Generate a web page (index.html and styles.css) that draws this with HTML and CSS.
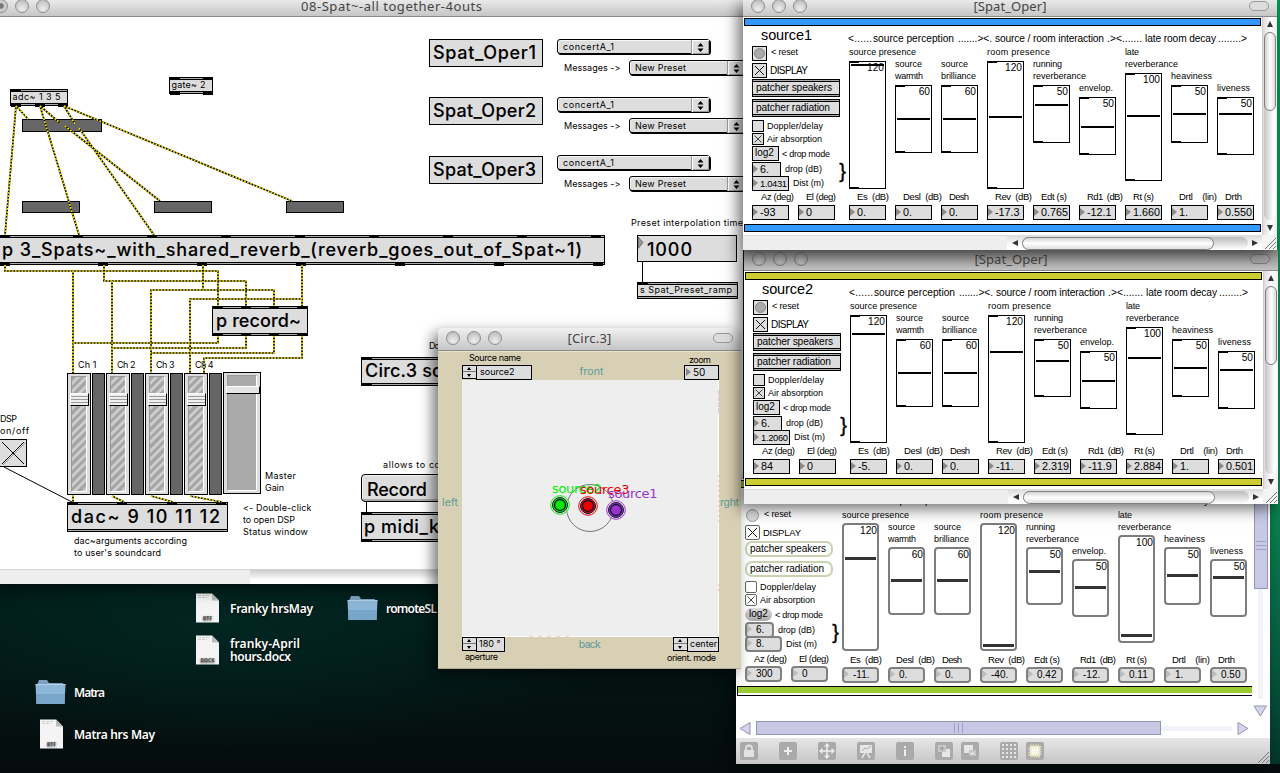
FILE: index.html
```html
<!DOCTYPE html>
<html lang="en">
<head>
<meta charset="utf-8">
<title>08-Spat~-all together-4outs</title>
<link rel="stylesheet" href="styles.css">
</head>
<body>
<main class="desktop">
  <div class="icons" id="icons"></div>

  <section class="window main-window">
    <header class="titlebar">
      <span class="lights"><i class="dirty"></i><i></i><i></i></span>
      <h1 class="title" data-w="181">08-Spat~-all together-4outs</h1>
    </header>
    <div class="main-body"></div>
    <footer class="main-scroll"><span></span></footer>
    <div class="patch" id="patch">
      <svg class="cords" id="cords" width="743" height="570"></svg>
    </div>
  </section>

  <section class="window max5-window">
    <div class="max5-content">
      <div class="panel max5" id="panel3"></div>
      <div class="vbar5"><span class="thumb5"><i></i></span><span class="track5"></span>
        <svg width="15" height="12"><path d="M1 1h12.500L7.300 11z" fill="#d4d4ec" stroke="#9494b0"/></svg></div>
    </div>
    <div class="hbar5">
      <svg width="12" height="13"><path d="M11 .5v12L1 6.500z" fill="#d4d4ec" stroke="#9494b0"/></svg>
      <span class="hthumb5"><i></i></span><span class="htrack5"></span>
      <svg width="12" height="13"><path d="M1 .5v12L11 6.500z" fill="#d4d4ec" stroke="#9494b0"/></svg>
    </div>
    <footer class="toolbar">
      <svg class="tool" viewBox="0 0 18 18"><path d="M4 8h10v7H4z" fill="#e2e2e2"/><path d="M6 8V6.500a3 3 0 0 1 6 0V8" fill="none" stroke="#e2e2e2" stroke-width="1.800"/></svg>
      <svg class="tool" viewBox="0 0 18 18"><path d="M9 5v8M5 9h8" stroke="#eee" stroke-width="2"/></svg>
      <svg class="tool" viewBox="0 0 18 18"><path d="M9 3v12M3 9h12" stroke="#eee" stroke-width="1.500"/><path d="M9 1l3 3.500H6zM9 17l3-3.500H6zM1 9l3.500-3v6zM17 9l-3.500-3v6z" fill="#eee"/></svg>
      <svg class="tool" viewBox="0 0 18 18"><path d="M3 3h12v8H3z" fill="#e6e6e6"/><path d="M5 9l3-3 2 1 4-3" fill="none" stroke="#aaa"/><path d="M8 11l-3 5M10 11l3 5" stroke="#e6e6e6" stroke-width="1.500"/></svg>
      <svg class="tool" viewBox="0 0 18 18"><path d="M8 4h2v2H8zM8 7.500h2V14H8z" fill="#eee"/></svg>
      <svg class="tool" viewBox="0 0 18 18"><path d="M7 7h8v8H7z" fill="#e6e6e6"/><path d="M3 3h8v7H3z" fill="#c9c9c9"/><path d="M7 4v5M4.500 6.500h5" stroke="#a0a0a0" stroke-width="1.300"/></svg>
      <svg class="tool pair" viewBox="0 0 18 18"><path d="M3 3h9v8H3z" fill="#e6e6e6"/><path d="M8 8h7v6H8z" fill="#c4c4c4"/><path d="M9.500 11.500h4" stroke="#eee" stroke-width="1.500"/></svg>
      <svg class="tool" viewBox="0 0 18 18"><path d="M2 4h14M2 8h14M2 12h14M2 16h14" transform="translate(0 -1)" stroke="#e6e6e6" stroke-width="2" stroke-dasharray="2 2"/></svg>
      <svg class="tool pair" viewBox="0 0 18 18"><path d="M4 4h10v10H4z" fill="#f6f6ee" stroke="#dfe2b0" stroke-width="3" stroke-dasharray="1.500 1"/></svg>
      <svg class="grip" viewBox="0 0 15 15"><path d="M3 14L14 3M7 14l7-7M11 14l3-3" stroke="#777"/></svg>
    </footer>
  </section>

  <section class="window circ-window">
    <header class="titlebar tall">
      <span class="lights"><i></i><i></i><i></i></span>
      <h2 class="title" data-w="44">[Circ.3]</h2>
      <span class="pill"></span>
    </header>
    <div class="circ-body">
      <div class="circ-row circ-top">
        <div class="circ-name"><span class="lbl" data-w="52">Source name</span>
          <div class="stepfield"><span class="stepper"></span><span class="cell name-cell">source2</span></div></div>
        <span class="dir" data-w="24">front</span>
        <div class="circ-zoom"><span class="lbl" data-w="22">zoom</span><span class="cell zoom-cell">50</span></div>
      </div>
      <div class="circ-mid">
        <span class="dir side" data-w="16">left</span>
        <svg class="field" width="257" height="257" viewBox="462 380 257 257">
          <rect x="462" y="380" width="257" height="257" fill="#fff"/>
          <rect x="462" y="380" width="256" height="256" fill="#eee"/>
          <path d="M718.500 390v23" stroke="#dcc8f0" stroke-dasharray="5 1"/>
          <path d="M718.500 475v50M718.500 584v10" stroke="#f6c8cc" stroke-dasharray="2 3"/>
          <path d="M529 636.500h42" stroke="#f8d4d8" stroke-dasharray="4 5"/>
          <circle cx="590" cy="508" r="23.500" fill="none" stroke="#777"/>
          <g id="sources"></g>
        </svg>
        <span class="dir side" data-w="19">rght</span>
      </div>
      <div class="circ-row circ-bottom">
        <div><div class="stepfield"><span class="stepper"></span><span class="cell ap-cell">180 °</span></div><span class="lbl ap" data-w="33">aperture</span></div>
        <span class="dir back" data-w="22">back</span>
        <div class="orient"><div class="stepfield"><span class="stepper"></span><span class="cell or-cell">center</span></div><span class="lbl om" data-w="49">orient. mode</span></div>
      </div>
    </div>
  </section>

  <section class="window oper-window oper2">
    <header class="titlebar dim">
      <span class="lights"><i></i><i></i><i></i></span>
      <h2 class="title" data-w="73">[Spat_Oper]</h2>
      <span class="pill"></span>
    </header>
    <div class="oper-content"><div class="panel yellow" id="panel2"></div></div>
  </section>

  <section class="window oper-window oper1">
    <header class="titlebar">
      <span class="lights"><i></i><i></i><i></i></span>
      <h2 class="title" data-w="73">[Spat_Oper]</h2>
      <span class="pill"></span>
    </header>
    <div class="oper-content"><div class="panel blue" id="panel1"></div></div>
  </section>
</main>
<script src="script.js"></script>
</body>
</html>
```
FILE: styles.css
```css
* { box-sizing: border-box; }
body { margin: 0; font-family: Inter, "Liberation Sans", sans-serif; color: #000; }
h1, h2 { margin: 0; font-weight: 400; }
i { font-style: normal; display: block; }
svg { display: block; flex: none; }

.desktop {
  position: relative; width: 1280px; height: 773px; overflow: hidden;
  background:
    linear-gradient(#009a54, #0a8a54 480px, #086044 640px, #043428 773px) 100% 0 / 10px 764px no-repeat,
    radial-gradient(ellipse 420px 130px at 230px 620px, #022622 0, transparent 100%),
    linear-gradient(#011a18 580px, #050c0c 773px);
}

/* Windows */
.window { position: absolute; isolation: isolate; box-shadow: -5px 5px 14px rgba(0,0,0,.55); }
.titlebar {
  position: relative; display: flex; align-items: center; justify-content: center;
  height: 17px; padding-bottom: 5px; border-bottom: 1px solid #8a8a8a;
  background: linear-gradient(#e9e9e9, #c6c6c6);
}
.titlebar.tall { height: 23px; padding-bottom: 2px; border-radius: 5px 5px 0 0; background: linear-gradient(#f0f0f0, #c6c6c6); }
.titlebar.dim { height: 21px; padding-bottom: 3px; background: linear-gradient(#8c8c8c, #c4c4c4); }
.title { font: 13px/16px "Noto Sans", "Open Sans", sans-serif; color: #444; white-space: nowrap; }
.lights { position: absolute; left: 8px; display: flex; gap: 7px; }
.lights i {
  width: 14px; height: 14px; border-radius: 50%; border: 1px solid #8f8f8f;
  background: radial-gradient(circle at 50% 75%, #eee, #b4b4b4);
}
.dim .lights i { background: radial-gradient(circle at 50% 75%, #bbb, #8e8e8e); border-color: #777; }
.lights i.dirty { background: radial-gradient(circle, #777 2px, #ccc 3.5px); }
.pill { position: absolute; right: 8px; width: 20px; height: 10px; border: 1.5px solid #999; border-radius: 5px; background: #ddd; }
.dim .pill { background: #aaa; border-color: #7c7c7c; }

.main-window { left: 0; top: 0; width: 743px; height: 584px; }
.main-window .lights { left: -6px; }
.main-window .title { position: absolute; left: 301px; top: -2px; }
.main-body { height: 552px; background: #fff; }
.main-scroll { height: 15px; background: #eee; border-top: 1px solid #d4d4d4; display: flex; padding-left: 250px; }
.main-scroll span { flex: 1; background: linear-gradient(#ccc, #fff 70%); }
.patch { position: absolute; inset: 0 0 15px 0; overflow: hidden; }
.cords { position: absolute; inset: 0; z-index: 2; }

/* Patch objects */
.node { position: absolute; background: #ddd; border: 1px solid #000; display: flex; align-items: center; white-space: nowrap; }
.node.object { border-width: 1px; box-shadow: inset 0 1px #aaa, inset 0 2px #000, inset 0 -1px #aaa, inset 0 -2px #000; }
.node.small { box-shadow: inset 0 1px #aaa, inset 0 2px #000, inset 0 -1px #aaa, inset 0 -2px #000; }
.node.meter { background: #666; }
.node.menu { border-radius: 3px; box-shadow: inset 1px 1px #f4f4f4, 1px 1px #000; }
.node.menu::after { content: ""; position: absolute; right: 0; top: 0; width: 17px; height: 14px; border-left: 1px solid #999; box-shadow: inset 1px 1px #fff, inset -1px -1px #999; }
.node.menu svg { position: absolute; right: 5px; top: 3px; }
.node.message { border-radius: 4px; box-shadow: inset 1px 1px #f4f4f4, inset 0 -2px #aaa; }
.port { position: absolute; height: 3px; width: 10px; background: #000; }
.text { position: absolute; line-height: 16px; white-space: pre; z-index: 1; }
.text.big { font-weight: 500; line-height: 24px; -webkit-text-stroke: .1px #000; }
.fader { position: absolute; width: 24px; height: 122px; padding: 2px 3px; border: 1px solid #000; background: #ddd; }
.fader i { height: 100%; border: 1px solid #999; border-right-color: #fff; border-bottom-color: #fff; background: repeating-linear-gradient(135deg, #a6a6a6 0 3px, #ccc 3px 6px); }
.fader b { position: absolute; left: 2px; top: 19px; width: 19px; height: 13px; border: 1px solid #000; border-left-color: #fff; border-top-color: #fff; background: repeating-linear-gradient(#eee 0 2px, #999 2px 3px); }
.fader.master { width: 38px; }
.fader.master i { background: #aaa; }
.fader.master b { top: 13px; width: 34px; height: 8px; background: #e4e4e4; }

/* Circular panner */
.circ-window { left: 438px; top: 328px; width: 303px; height: 341px; border-radius: 5px 5px 0 0; }
.circ-body { height: 318px; background: #d8d0b4; box-shadow: inset 0 1px #ece4c8, inset 0 -1px #b4ac90; }
.circ-row { display: flex; justify-content: space-between; padding: 0 22px 0 24px; }
.circ-top { height: 29px; padding-top: 2px; }
.circ-top .dir { margin: 13px 0 0 -33px; }
.lbl { display: block; font-size: 9px; line-height: 11px; white-space: nowrap; }
.circ-name .lbl { margin: -1px 0 2px 7px; }
.circ-zoom .lbl { margin: 1px 0 0 5px; }
.circ-zoom .cell { width: 35px; }
.circ-zoom .zoom-cell { position: relative; padding-left: 8px; font-size: 10px; }
.zoom-cell::before { content: ""; position: absolute; left: 1px; top: 2px; border: 4.5px solid transparent; border-left: 5px solid #888; border-right: 0; }
.stepfield { display: flex; height: 15px; }
.stepper { position: relative; width: 15px; height: 14px; border: 1px solid #000; background: linear-gradient(#ddd 0 5px, #777 5px 6px, #ddd 6px); }
.stepper::before, .stepper::after { content: ""; position: absolute; left: 4px; border: 2.5px solid transparent; }
.stepper::before { top: -1px; border-bottom: 3px solid #000; }
.stepper::after { top: 8px; border-top: 3px solid #000; }
.cell { display: block; height: 15px; margin-left: -1px; padding-left: 3px; border: 1px solid #000; background: #ddd; font-size: 9px; line-height: 12px; white-space: nowrap; }
.circ-zoom .cell { margin-left: 0; }
.name-cell { width: 56px; }
.ap-cell { width: 29px; padding-left: 2px; }
.or-cell { width: 32px; padding-left: 2px; }
.dir { font-size: 10.500px; line-height: 12px; color: #5b9c98; white-space: nowrap; }
.circ-mid { display: flex; height: 257px; align-items: center; }
.side { width: 24px; flex: none; padding-left: 4px; margin-top: -11px; overflow: visible; }
.field + .side { width: 22px; padding-left: 1px; }
.circ-bottom { height: 32px; }
.back { margin: 2px 0 0 7px; }
.ap { margin-left: 3px; margin-top: -1px; }
.orient .stepfield { margin-left: 6px; }
.src { font-family: "DejaVu Sans", sans-serif; font-size: 13px; }

/* Spat_Oper windows */
.oper-window { width: 534px; height: 250px; background: #fff; }
.oper1 { left: 743px; top: 0; }
.oper2 { left: 744px; top: 250px; height: 254px; }
.oper-content { display: grid; grid-template-columns: 519px 15px; grid-template-rows: 218px 15px; }
.vbar { padding: 15px 1px; background: linear-gradient(90deg, #ddd, #fff 60%, #eee); position: relative; border-left: 1px solid #ccc; }
.vbar::before, .vbar::after { content: ""; position: absolute; left: 4px; border: 3.5px solid transparent; }
.vbar::before { top: 1px; border-bottom: 6px solid #333; }
.vbar::after { bottom: 1px; border-top: 6px solid #333; }
.trough { height: 188px; border-radius: 7px; background: linear-gradient(90deg, #c4c4c4, #fff 80%); }
.trough span { display: block; height: 79px; border: 1.5px solid #808080; border-radius: 7px; background: linear-gradient(90deg, #d0d0d0, #fff 50%, #ddd); }
.hbar { display: flex; align-items: center; background: #eee; padding-left: 264px; border-top: 1px solid #ddd; }
.hbar .rail { flex: 1; height: 14px; display: flex; align-items: center; gap: 4px; padding: 0 4px 0 5px; background: linear-gradient(#ddd, #fff 70%); }
.hbar .rail > b { flex: 1; height: 13px; border-radius: 7px; background: linear-gradient(#bbb, #fff); }
.hbar .rail > b > i { width: 192px; height: 13px; border: 1.5px solid #808080; border-radius: 7px; background: linear-gradient(#d4d4d4, #fff 50%, #ddd); }
.arrow { border: 3.500px solid transparent; width: 6px; }
.arrow.l { border-right: 6px solid #333; border-left: 0; }
.arrow.r { border-left: 6px solid #333; border-right: 0; }
.corner { background: #f4f4f4; }

.panel { width: 519px; height: 218px; padding: 1px 0 0 1px; background: #fff; font: 9px/12px "Liberation Sans", Arial, sans-serif; }
.banner { width: 517px; height: 8px; border: 1px solid #000; }
.blue .banner { background: #3399ff; }
.yellow .banner { background: #cccc33; }
.panel-body { display: flex; height: 198px; white-space: pre; }
.controls { width: 105px; padding-left: 8px; flex: none; }
.srcname { height: 20px; padding-left: 9px; font-size: 14.500px; line-height: 18px; }
.row { display: flex; align-items: center; }
.bang, .tog { width: 15px; height: 15px; margin-right: 4px; border: 1px solid #000; background: #ddd; flex: none; }
.bang { padding: 1px; margin-bottom: 2px; }
.bang i { width: 11px; height: 11px; border-radius: 50%; background: #aaa; border: 1px solid #888; }
.reset { height: 17px; align-items: flex-start; }
.disp { height: 15px; margin-bottom: 1px; font-size: 10px; }
.disp .tog { margin-right: 3px; }
.obj { width: 88px; height: 18px; padding-left: 3px; margin-bottom: 2px; border: 1px solid #000; background: #ddd; font-size: 10.200px; line-height: 15px; box-shadow: inset 0 1px #aaa, inset 0 2px #000, inset 0 -1px #aaa, inset 0 -2px #000; }
.obj + .check { margin-top: 3px; }
.check { height: 12px; margin-bottom: 1px; }
.check .tog { width: 12px; height: 12px; margin-right: 3px; }
.num { position: relative; width: 37px; height: 15px; padding-left: 7px; border: 1px solid #000; background: #ddd; font-size: 10.800px; line-height: 12px; flex: none; }
.num .long { font-size: 9.400px; }
.num::before { content: ""; position: absolute; left: 0; top: 2px; border: 4.5px solid transparent; border-left: 5px solid #8a8a8a; border-right: 0; }
.num.plain { padding-left: 2px; width: 27px; font-size: 10px; }
.num.plain::before { display: none; }
.logrow { height: 15px; gap: 3px; }
.dropgroup { display: flex; align-items: center; height: 29px; }
.dropgroup .row { height: 14px; gap: 4px; }
.dropgroup .num { margin-top: 1px; }
.dropgroup .n6 { width: 29px; }
.brace { margin-left: auto; padding-right: 3px; font: 20px/24px "Liberation Sans", sans-serif; -webkit-text-stroke: .4px #000; transform: translateY(-5px); }
.fields { display: flex; height: 30px; }
.fcol { width: 46px; flex: none; }
.fcol > span { display: block; height: 15px; line-height: 14px; font-size: 9.500px; }
.sections { display: flex; height: 20px; font-size: 10.200px; line-height: 25px; margin-left: -1px; }
.sections span { flex: none; overflow: visible; }
.columns { display: flex; height: 144px; }
.scol { width: 46px; flex: none; }
.scol .cap { display: block; height: 12px; line-height: 13px; }
.slider { position: relative; width: 37px; margin-top: 3px; border: 1px solid #000; font-size: 10.200px; line-height: 12px; text-align: right; padding-right: 1px; background: linear-gradient(#000, #000) 0 0 / 9px 1px no-repeat, linear-gradient(#000, #000) 0 100% / 9px 1px no-repeat; }
.slider i { position: absolute; left: 1px; right: 1px; height: 2px; background: #000; }

/* Max 5 styling */
.max5 .banner { border-right: 0; height: 10px; width: 515px; background: linear-gradient(#99cc33 6px, #fff 6px); }
.max5 .banner:first-child { height: 8px; }
.max5 .tog { border: 1.500px solid #666; border-radius: 2px; background: #fff; }
.max5 .bang { width: 13px; height: 13px; margin: 1px 5px 0 1px; border: 1.500px solid #999; border-radius: 50%; background: #ddd; }
.max5 .bang i { display: none; }
.max5 .obj { border: 2px solid #c9d3b0; border-radius: 7px; background: #fff; box-shadow: none; height: 16px; margin: 1px 0 4px; line-height: 12px; font-size: 10px; }
.max5 .obj + .check { margin-top: 4px; }
.max5 .num { border: 2px solid #808080; border-radius: 4px; height: 16px; line-height: 12px; padding-left: 9px; font-size: 10px; }
.max5 .num::before { top: 1px; border-left-color: #bbb; }
.max5 .num.plain { border: 0; padding: 0 4px; border-radius: 7px; background: linear-gradient(#ddd, #aaa); height: 13px; }
.max5 .fcol > span, .max5 .cap { position: relative; top: 1px; }
.max5 .slider { border: 2px solid #7d7d7d; border-radius: 4px; background: #fff; padding: 0; }
.max5 .slider i { background: #333; height: 3px; margin-top: -2px; }
.max5 .disp { font-size: 9.500px; }

.max5-window { left: 736px; top: 479px; width: 534px; height: 285px; background: #fff; }
.max5-content { display: flex; height: 242px; overflow: hidden; }
.max5 { width: 517px; flex: none; }
.vbar5 { width: 15px; display: flex; flex-direction: column; align-items: center; }
.thumb5 { width: 14px; height: 110px; background: #c9c9e6; border: 1px solid #9494b0; padding: 61px 1px 0; flex: none; }
.thumb5 i { height: 10px; background: repeating-linear-gradient(#a0a0c0 0 1px, transparent 1px 4px); }
.track5 { width: 5px; height: 110px; margin-bottom: 6px; background: #f2f2f9; flex: none; }
.hbar5 { display: flex; align-items: center; height: 14px; padding-left: 3px; }
.hthumb5 { width: 405px; height: 14px; margin-left: 5px; background: #c9c9e6; border: 1px solid #9494b0; padding: 1px 0 0 197px; }
.hthumb5 i { width: 10px; height: 10px; background: repeating-linear-gradient(90deg, #a0a0c0 0 1px, transparent 1px 4px); }
.htrack5 { width: 71px; height: 5px; margin-right: 5px; background: #f2f2f9; }
.toolbar { display: flex; gap: 21px; height: 26px; margin-top: 3px; padding: 4px 0 0 4px; background: linear-gradient(#e6e6e6, #c6c6c6); }
.tool { width: 18px; height: 18px; border-radius: 2px; background: #aaa; }
.tool.pair { margin-left: -13px; }
.grip { width: 15px; height: 15px; margin: 7px 0 0 auto; }

/* Desktop icons */
.file { position: absolute; display: flex; align-items: center; height: 30px; color: #fff; font: 600 12px/13px "Noto Sans", "Open Sans", sans-serif; text-shadow: 0 1px 2px #000; white-space: pre; }
.file svg { margin-right: 8px; }
```
FILE: script.js
```js
const byId = id => document.getElementById(id);

/* ---------- main patch ---------- */
const patch = byId('patch');
const put = (cls, x, y, w, h, html = '') =>
  patch.insertAdjacentHTML('beforeend',
    `<div class="${cls}" style="left:${x}px;top:${y}px;width:${w}px;height:${h}px">${html}</div>`);
const text = (x, cy, w, str, big) =>
  patch.insertAdjacentHTML('beforeend',
    `<span class="text${big ? ' big' : ''}" data-w="${w}" style="left:${x}px;top:${cy - (big ? 12 : 8)}px;font-size:${big ? 18 : 9}px">${str}</span>`);
const ports = (y, xs, w = 10) => xs.forEach(x => put('port', x, y, w, 3));
const updown = '<svg width="7" height="9"><path d="M3.500 0L6.500 3.500H.5zM3.500 9L.5 5.500h6z"/></svg>';

put('node small', 169, 77, 44, 17); text(171.5, 85, 34, 'gate~ 2');
ports(77, [170, 203]); ports(92, [170, 203]);
put('node small', 10, 89, 58, 17); text(12.500, 97, 48, 'adc~ 1 3 5');
ports(89, [11]); ports(104, [11, 35, 58]);
put('node meter', 22, 119, 80, 13);
[22, 154, 286].forEach(x => put('node meter', x, 201, 58, 12));

put('node object', -4, 235, 609, 30);
text(2, 249.500, 580, 'p 3_Spats~_with_shared_reverb_(reverb_goes_out_of_Spat~1)', true);
ports(235, [0, 73, 147, 221, 295, 369, 443, 517, 591]);
ports(263, [0, 98, 197, 296, 395, 494, 593]);

[[39, 1], [97, 2], [156, 3]].forEach(([y, n]) => {
  put('node', 429, y, 114, 28); text(433, y + 13.500, 103, 'Spat_Oper' + n, true);
});
[39, 97, 155].forEach(y => {
  put('node menu', 557, y, 153, 15, updown); text(563, y + 7.500, 51, 'concertA_1');
  text(564, y + 28.500, 55, 'Messages -&gt;');
  put('node menu', 629, y + 21, 117, 15, updown); text(635, y + 28.500, 51, 'New Preset');
});
text(631, 222.500, 112, 'Preset interpolation time');
put('node', 637, 235, 100, 27); text(647, 249.500, 45, '1000', true);
put('node small', 637, 282, 101, 17); text(640, 290, 92, 's Spat_Preset_ramp');
ports(282, [638]);

put('node object', 212, 306, 96, 30); text(216, 320.500, 85, 'p record~', true);
ports(306, [213, 241, 269, 297]); ports(333, [213, 241, 269, 297]);

[0, 1, 2, 3].forEach(n => {
  const x = 67 + 39 * n;
  put('fader', x, 373, 24, 122, '<i></i><b></b>');
  put('node meter', x + 25, 373, 13, 122);
  text(x + 11, 365, 18.500, 'Ch ' + (n + 1));
});
put('fader master', 223, 372, 38, 122, '<i></i><b></b>');

text(0, 419, 17, 'DSP'); text(0, 431, 29, 'on/off');
put('node', -2, 439, 29, 28);
put('node object', 67, 502, 161, 30); text(71, 516.500, 149, 'dac~ 9 10 11 12', true);
ports(502, [68, 117, 167, 216]);
text(265, 476, 31, 'Master'); text(265, 488, 19, 'Gain');
text(243, 508, 67, '&lt;- Double-click'); text(243, 520, 52, 'to open DSP'); text(243, 532, 65, 'Status window');
text(74, 541, 113, 'dac~arguments according'); text(74, 553, 87, "to user's soundcard");

text(429, 345.500, 11, 'Do');
put('node object', 361, 357, 140, 29); text(365, 371, 78, 'Circ.3 so', true);
ports(357, [362]); ports(383, [362]);
text(383, 465, 57, 'allows to co');
put('node message', 361, 474, 120, 28); text(367, 490, 60, 'Record', true);
put('node object', 361, 512, 140, 30); text(364, 527, 75, 'p midi_k', true);
ports(512, [362]); ports(539, [362]);

const routes = [
  '16,106 5,235', '16,106 28,119', '40,106 79,235', '40,106 60,123', '65,126 160,201',
  '64,106 75,124', '79,128 154,235', '64,106 292,201',
  '5,265 5,271 218,271 218,306', '73,271 73,373',
  '104,265 104,281 246,281 246,306', '112,281 112,373',
  '203,265 203,290', '151,373 151,290 274,290 274,306',
  '302,265 302,306', '302,299 190,299 190,373',
  '218,336 218,343 73,343', '246,336 246,348 112,348', '274,336 274,353 151,353',
  '302,336 302,358 204,358 204,373',
  '73,495 73,502', '112,496 124,502', '151,496 173,502', '190,496 222,502'
];
byId('cords').innerHTML = routes.map(r =>
  `<g fill="none"><polyline points="${r}" stroke="#000" stroke-width="1.700"/>
   <polyline points="${r}" stroke="#ffe800" stroke-width="1.700" stroke-dasharray="1.700 1.500"/></g>`).join('') +
  `<path d="M4 467L72 502M642.500 262v20M366.500 502v10M2 442L24 464M24 442L2 464" fill="none" stroke="#000"/>
   <path d="M25 443L3 465" stroke="#999"/>
   <path d="M638 237l5 5.500-5 6z" fill="#999" stroke="#333" stroke-width=".6"/>`;

/* ---------- panner sources ---------- */
byId('sources').innerHTML = [
  [560, 505, '#00ee00', 'source2', 552, 493], [588, 506, '#ee0000', 'source3', 580, 494],
  [616, 510, '#9933cc', 'source1', 608, 498]
].map(([x, y, c, name, tx, ty]) =>
  `<circle cx="${x}" cy="${y}" r="9.300" fill="#eee" stroke="${c}"/><circle cx="${x}" cy="${y}" r="7.500" fill="${c}" stroke="#113"/>
   <circle cx="${x}" cy="${y}" r="5.500" fill="${c}" stroke="#113" stroke-width="1.300"/>
   <text class="src" x="${tx}" y="${ty}" fill="${c}" textLength="49.500">${name}</text>`).join('');

/* ---------- Spat_Oper panels ---------- */
/* caption lines, slider top, height, range, field label, label width */
const params = [
  [['source presence', 67], 61, 128, 120, 'Es  (dB)', 32],
  [['source', 27, 'warmth', 28], 85, 68, 60, 'Desl  (dB)', 39],
  [['source', 27, 'brilliance', 35], 85, 68, 60, 'Desh', 20],
  [['room presence', 63], 61, 128, 120, 'Rev  (dB)', 37],
  [['running', 29, 'reverberance', 53], 85, 58, 50, 'Edt (s)', 26],
  [['envelop.', 34], 97, 58, 50, 'Rd1  (dB)', 36],
  [['late', 14, 'reverberance', 53], 73, 108, 100, 'Rt (s)', 21],
  [['heaviness', 41], 85, 58, 50, 'Drtl    (lin)', 38],
  [['liveness', 33], 97, 58, 50, 'Drth', 17]
];
const sections = [['&lt;......', 24, 25], ['source perception', 81, 85], ['.......&gt;&lt;.', 34, 37],
  ['source / room interaction', 109, 112], ['.&gt;&lt;.......', 35, 38], ['late room decay', 71, 73], ['........&gt;', 29, 30]];
const cross = s => `<svg width="${s - 2}" height="${s - 2}" viewBox="0 0 13 13"><path d="M2 2l9 9M11 2l-9 9" stroke="#111"/></svg>`;
const field = (label, pad, w, val) =>
  `<div class="fcol"><span style="padding-left:${pad}px"><b class="fit" data-w="${w}">${label}</b></span><div class="num">${val}</div></div>`;

function panel(id, d) {
  const dist = d.dist.length > 4 ? `<span class="long" data-w="27">${d.dist}</span>` : d.dist;
  byId(id).innerHTML = `<div class="banner"></div><div class="panel-body"><div class="controls">` +
    `<div class="srcname"><span data-w="51">${d.name}</span></div>` +
    `<div class="row reset"><div class="bang"><i></i></div><span data-w="27">&lt; reset</span></div>` +
    `<div class="row disp"><div class="tog">${cross(15)}</div><span data-w="38">DISPLAY</span></div>` +
    `<div class="obj"><span data-w="76">patcher speakers</span></div><div class="obj"><span data-w="74">patcher radiation</span></div>` +
    `<div class="row check"><div class="tog"></div><span data-w="56">Doppler/delay</span></div>` +
    `<div class="row check"><div class="tog">${cross(12)}</div><span data-w="55">Air absorption</span></div>` +
    `<div class="row logrow"><div class="num plain">log2</div><span data-w="48">&lt; drop mode</span></div>` +
    `<div class="dropgroup"><div><div class="row"><div class="num n6">6.</div><span data-w="37">drop (dB)</span></div>` +
    `<div class="row"><div class="num">${dist}</div><span data-w="31">Dist (m)</span></div></div><span class="brace">}</span></div>` +
    `<div class="fields">${field('Az (deg)', 9, 33, d.az)}${field('El (deg)', 8, 30, '0')}</div></div>` +
    `<div class="strips"><div class="sections">` +
    sections.map(([s, w, box]) => `<span style="width:${box}px"><b class="fit" data-w="${w}">${s}</b></span>`).join('') +
    `</div><div class="columns">` +
    params.map(([caps, top, h, max], i) => {
      const lines = [];
      for (let k = 0; k < caps.length; k += 2) lines.push(`<span class="cap"><b class="fit" data-w="${caps[k + 1]}">${caps[k]}</b></span>`);
      return `<div class="scol" style="padding-top:${top - 49 - 12 * lines.length}px">${lines.join('')}` +
        `<div class="slider" style="height:${h}px">${max}<i style="top:${d.pos[i] - top - 2}px"></i></div></div>`;
    }).join('') + `</div><div class="fields">` +
    params.map((p, i) => field(p[4], 8, p[5], d.vals[i])).join('') +
    `</div></div></div><div class="banner"></div>`;
}
panel('panel1', { name: 'source1', dist: '1.0431', az: '-93', pos: [65, 119, 119, 117, 105, 127, 116, 114, 114],
  vals: ['0.', '0.', '0.', '-17.3', '0.765', '-12.1', '1.660', '1.', '0.550'] });
panel('panel2', { name: 'source2', dist: '1.2060', az: '84', pos: [80, 119, 119, 98, 107, 127, 104, 114, 116],
  vals: ['-5.', '0.', '0.', '-11.', '2.319', '-11.9', '2.884', '1.', '0.501'] });
panel('panel3', { name: 'source3', dist: '8.', az: '300', pos: [97, 119, 119, 184, 110, 126, 174, 114, 116],
  vals: ['-11.', '0.', '0.', '-40.', '0.42', '-12.', '0.11', '1.', '0.50'] });

document.querySelectorAll('.oper-content').forEach(c => c.insertAdjacentHTML('beforeend',
  `<div class="vbar"><div class="trough"><span></span></div></div>
   <div class="hbar"><div class="rail"><i class="arrow l"></i><b><i></i></b><i class="arrow r"></i></div></div>
   <svg class="corner" width="15" height="15"><path d="M3 14L14 3M7 14l7-7M11 14l3-3" stroke="#777"/></svg>`));

/* ---------- desktop files ---------- */
const doc = kind => `<svg width="27" height="30"><path d="M1 .5h16l7 7V29.500H1z" fill="#f4f4f4"/><path d="M17 .5v7h7z" fill="#bbb"/>
  <path d="M3 2.500h12M3 4.500h9" stroke="#ccc" stroke-dasharray="3 1"/><text x="12.500" y="27" font-size="5" font-weight="700" fill="#555" text-anchor="middle">${kind}</text></svg>`;
const folder = `<svg width="31" height="26"><path d="M2 6l2-5h8l2 3h14v4z" fill="#7ba3c0"/><path d="M.5 5.500h30L29.500 25h-28z" fill="#8cb7d8"/>
  <path d="M1 15h29l-.5 10h-28z" fill="#78a6cb"/><path d="M.5 5.500h30" stroke="#b4d2e6"/></svg>`;
[
  [195, 593, doc('RTF'), ['Franky hrsMay', 83]],
  [195, 635, doc('DOCX'), ['franky-April', 70, 'hours.docx', 61]],
  [347, 593, folder, ['romoteSL', 51]],
  [35, 677, folder, ['Matra', 31]],
  [39, 719, doc('RTF'), ['Matra hrs May', 81]]
].forEach(([x, y, icon, l]) => {
  let label = `<div data-w="${l[1]}">${l[0]}</div>`;
  if (l[2]) label += `<div data-w="${l[3]}">${l[2]}</div>`;
  byId('icons').insertAdjacentHTML('beforeend', `<div class="file" style="left:${x}px;top:${y}px">${icon}<div>${label}</div></div>`);
});

/* ---------- spread each label over its nominal width ---------- */
document.querySelectorAll('[data-w]').forEach(el => {
  el.style.fontWeight = el.classList.contains('fit') ? '400' : '';
  const range = document.createRange();
  range.selectNodeContents(el);
  const natural = range.getBoundingClientRect().width;
  const n = el.textContent.length;
  if (n > 1) el.style.letterSpacing = ((el.dataset.w - natural) / (n - 1)).toFixed(3) + 'px';
});
```
